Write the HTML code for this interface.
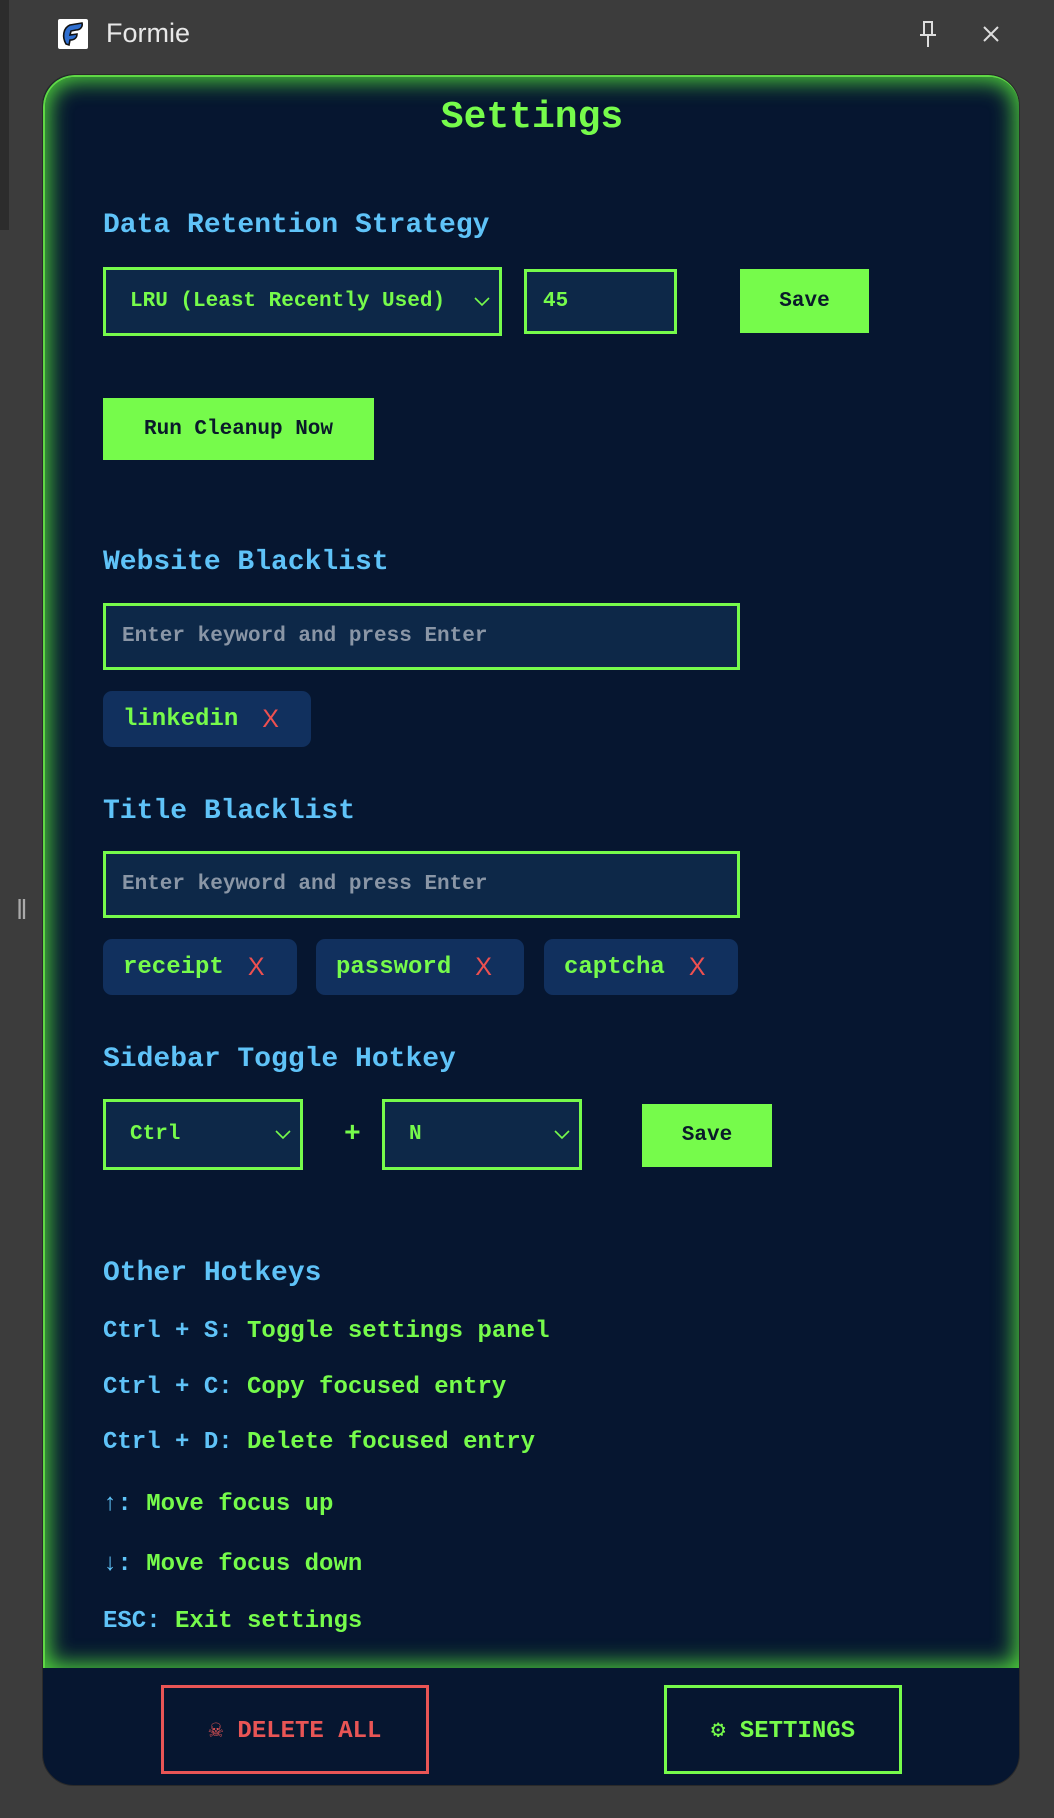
<!DOCTYPE html>
<html><head><meta charset="utf-8"><style>
*{box-sizing:border-box;margin:0;padding:0}
body{width:1054px;height:1818px;background:#3c3c3c;position:relative;overflow:hidden;font-family:"Liberation Mono","DejaVu Sans Mono",monospace;font-weight:bold}
.a{position:absolute}
.t{white-space:nowrap;line-height:1}
.panel{left:42px;top:74px;width:978px;height:1712px;background:#061630;border-radius:32px;overflow:hidden;border:1px solid #2a2a2a}
.content{left:0;top:0;width:978px;height:1593px;box-shadow:inset 0 0 22px 4px #4fd23b;border-radius:32px 32px 0 0;border:2px solid #5fd845;border-bottom:none}
.h{color:#5fc3f8;font-size:28px}
.g{color:#76fb4b}
.box{border:3px solid #76fb4b;background:#0d2848;color:#76fb4b;font-size:21px;display:flex;align-items:center}
.btn{background:#76fb4b;color:#0a1a2a;font-size:21px;display:flex;align-items:center;justify-content:center}
.tag{background:#11305e;border-radius:9px;color:#76fb4b;font-size:24px;display:flex;align-items:center;padding-left:20px}
.tag b{color:#ee5050;font-weight:normal;margin-left:24px;font-family:"Liberation Sans",sans-serif;font-size:25px}
.ph{color:#8a96a6;font-size:21px;font-weight:bold}
.hk{font-size:24px;color:#76fb4b}
.hk span{color:#5fc3f8}
</style></head><body>
<div class="a" style="left:0;top:0;width:9px;height:230px;background:#2c2c2c"></div>
<div class="a t" style="left:16px;top:896px;color:#aaa;font-size:28px;font-family:'Liberation Sans',sans-serif;font-weight:normal">‖</div>
<div class="a" style="left:58px;top:19px;width:30px;height:30px;background:#fff;border-radius:2px"><svg width="30" height="30" viewBox="0 0 30 30"><path d="M8 25 C4 18 5 9 12 6 L24 4 C25 8 22 11 18 11 L13 12 L12 16 L19 15 C19 19 16 21 12 21 L11 26Z" fill="#2f6fd0" stroke="#111" stroke-width="1.6"/></svg></div>
<div class="a t" style="left:106px;top:20px;color:#e8e8e8;font-size:27px;font-family:'Liberation Sans',sans-serif;font-weight:normal">Formie</div>
<svg class="a" style="left:916px;top:20px" width="24" height="30" viewBox="0 0 24 30"><path d="M7 2h10M8 2v12M16 2v12M4 15h16M12 15v12" stroke="#ddd" stroke-width="2" fill="none"/></svg>
<svg class="a" style="left:981px;top:24px" width="20" height="20" viewBox="0 0 20 20"><path d="M3 3L17 17M17 3L3 17" stroke="#ddd" stroke-width="2"/></svg>

<div class="a panel">
<div class="a content"></div>
<div class="a t g" style="left:0;width:978px;text-align:center;top:24px;font-size:38px">Settings</div>
<div class="a t h" style="left:60px;top:137px">Data Retention Strategy</div>
<div class="a box" style="left:60px;top:192px;width:399px;height:69px;padding-left:24px">LRU (Least Recently Used)<svg style="position:absolute;right:9px" width="16" height="10" viewBox="0 0 16 10"><path d="M1 1l7 7 7-7" stroke="#76fb4b" stroke-width="1.6" fill="none"/></svg></div>
<div class="a box" style="left:481px;top:194px;width:153px;height:65px;padding-left:16px">45</div>
<div class="a btn" style="left:697px;top:194px;width:129px;height:64px">Save</div>
<div class="a btn" style="left:60px;top:323px;width:271px;height:62px">Run Cleanup Now</div>

<div class="a t h" style="left:60px;top:474px">Website Blacklist</div>
<div class="a box" style="left:60px;top:528px;width:637px;height:67px;padding-left:16px"><span class="ph">Enter keyword and press Enter</span></div>
<div class="a tag" style="left:60px;top:616px;width:208px;height:56px">linkedin<b>X</b></div>

<div class="a t h" style="left:60px;top:723px">Title Blacklist</div>
<div class="a box" style="left:60px;top:776px;width:637px;height:67px;padding-left:16px"><span class="ph">Enter keyword and press Enter</span></div>
<div class="a tag" style="left:60px;top:864px;width:194px;height:56px">receipt<b>X</b></div>
<div class="a tag" style="left:273px;top:864px;width:208px;height:56px">password<b>X</b></div>
<div class="a tag" style="left:501px;top:864px;width:194px;height:56px">captcha<b>X</b></div>

<div class="a t h" style="left:60px;top:971px">Sidebar Toggle Hotkey</div>
<div class="a box" style="left:60px;top:1024px;width:200px;height:71px;padding-left:24px">Ctrl<svg style="position:absolute;right:9px" width="16" height="10" viewBox="0 0 16 10"><path d="M1 1l7 7 7-7" stroke="#76fb4b" stroke-width="1.6" fill="none"/></svg></div>
<div class="a t g" style="left:301px;top:1046px;font-size:28px">+</div>
<div class="a box" style="left:339px;top:1024px;width:200px;height:71px;padding-left:24px">N<svg style="position:absolute;right:9px" width="16" height="10" viewBox="0 0 16 10"><path d="M1 1l7 7 7-7" stroke="#76fb4b" stroke-width="1.6" fill="none"/></svg></div>
<div class="a btn" style="left:599px;top:1029px;width:130px;height:63px">Save</div>

<div class="a t h" style="left:60px;top:1185px">Other Hotkeys</div>
<div class="a t hk" style="left:60px;top:1245px"><span>Ctrl + S:</span> Toggle settings panel</div>
<div class="a t hk" style="left:60px;top:1301px"><span>Ctrl + C:</span> Copy focused entry</div>
<div class="a t hk" style="left:60px;top:1356px"><span>Ctrl + D:</span> Delete focused entry</div>
<div class="a t hk" style="left:60px;top:1418px"><span>↑:</span> Move focus up</div>
<div class="a t hk" style="left:60px;top:1478px"><span>↓:</span> Move focus down</div>
<div class="a t hk" style="left:60px;top:1535px"><span>ESC:</span> Exit settings</div>

<div class="a" style="left:118px;top:1610px;width:268px;height:89px;border:3px solid #e85555;color:#e85555;font-size:24px;display:flex;align-items:center;justify-content:center">☠ DELETE ALL</div>
<div class="a" style="left:621px;top:1610px;width:238px;height:89px;border:3px solid #76fb4b;color:#76fb4b;font-size:24px;display:flex;align-items:center;justify-content:center">⚙ SETTINGS</div>
</div>
</body></html>
